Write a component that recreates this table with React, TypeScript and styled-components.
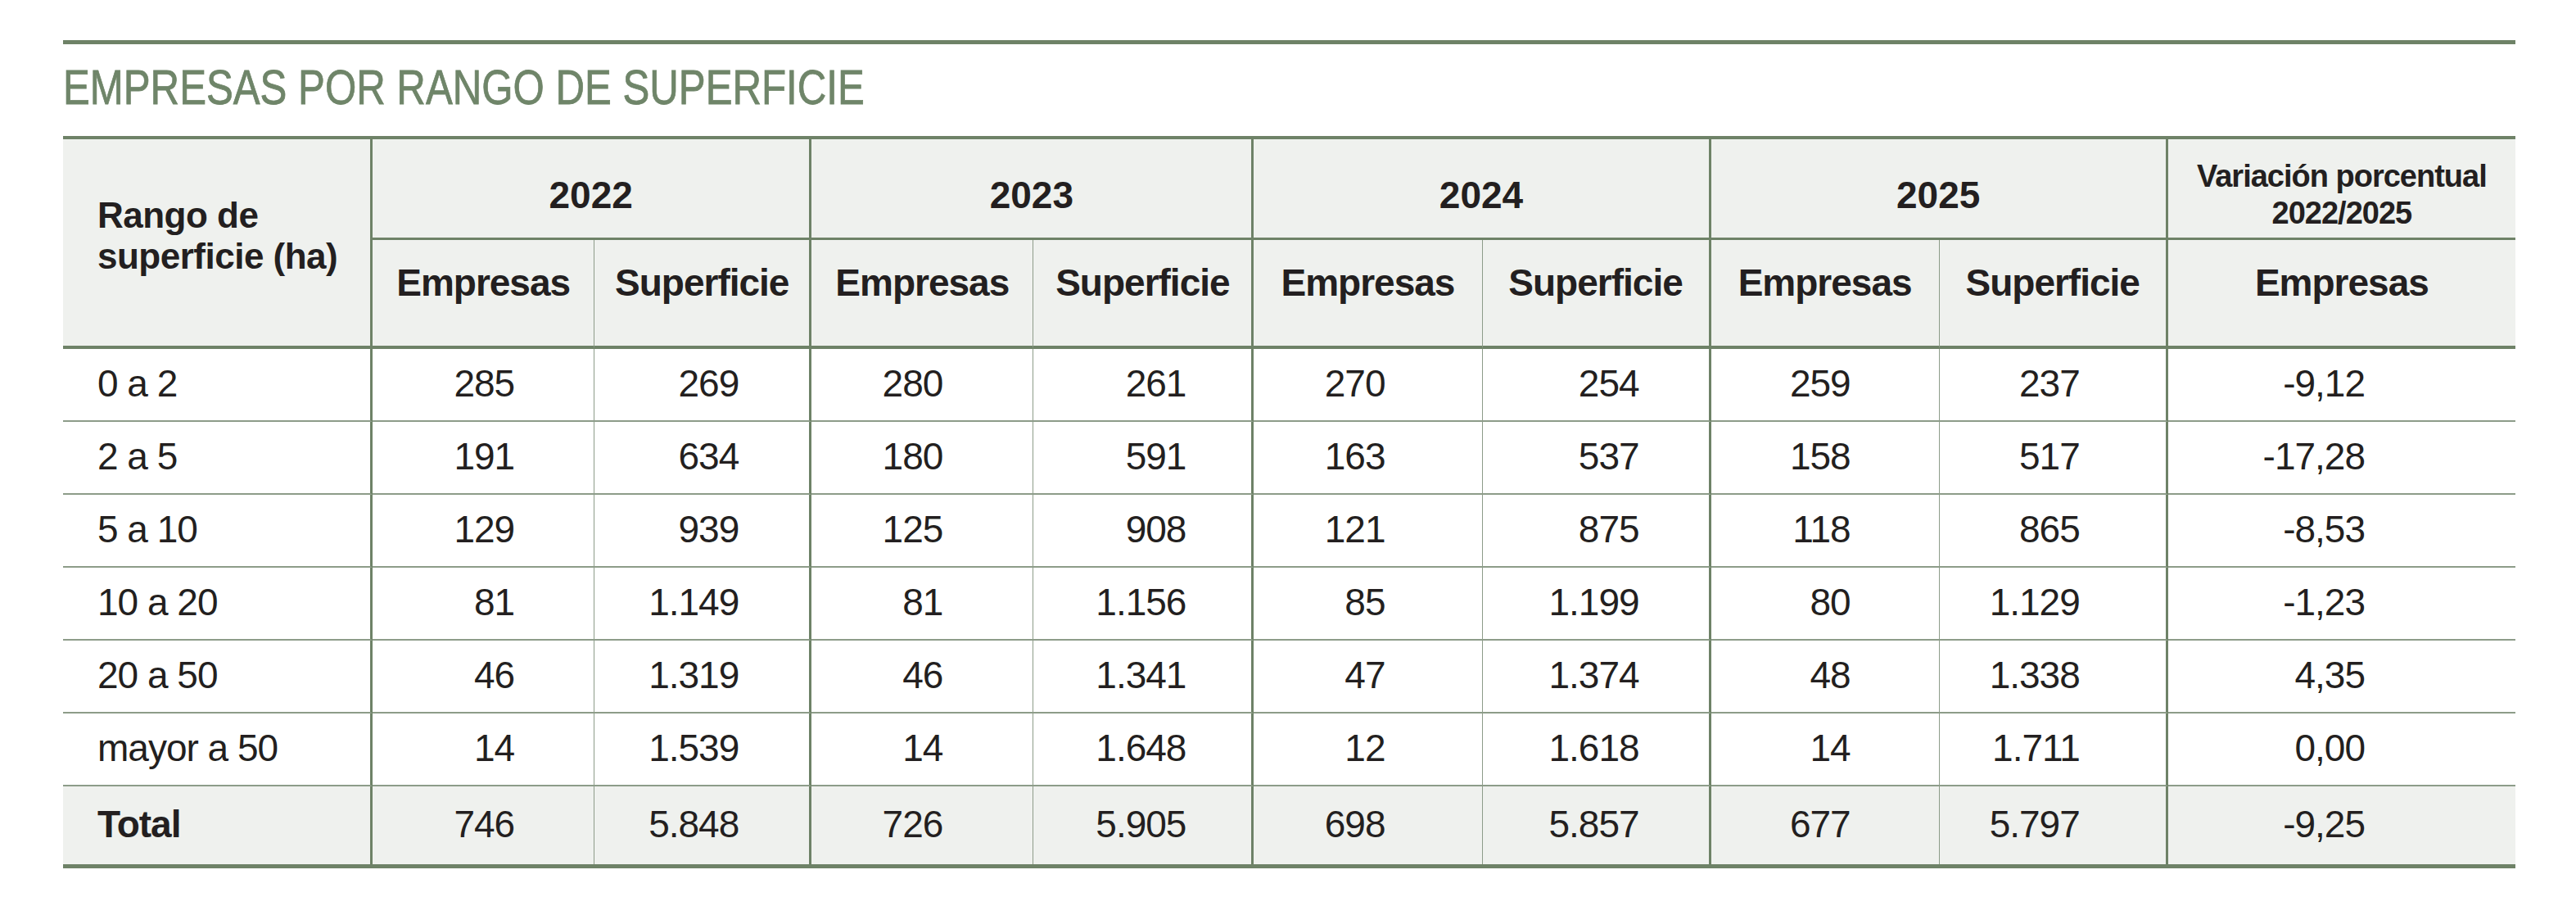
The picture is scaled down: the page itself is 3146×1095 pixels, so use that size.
import * as React from 'react';
import styled, { createGlobalStyle } from 'styled-components';

const LINE = '#6e8267';
const LINE_LIGHT = '#8d9c89';
const HEAD_BG = '#eff1ee';
const INK = '#231f20';

type Edge = 'main' | 'sub' | 'none';

interface Row {
  label: string;
  values: string[];
}

const years = ['2022', '2023', '2024', '2025'];

// ancho de cada columna, en px
const colWidths = [378, 271, 265, 271, 269, 279, 279, 279, 279, 424];

// margen derecho de cada cifra dentro de su columna
const pads = [97, 86, 110, 80, 118, 85, 108, 105, 184];

const edges: Edge[] = ['sub', 'main', 'sub', 'main', 'sub', 'main', 'sub', 'main', 'none'];

const rows: Row[] = [
  { label: '0 a 2', values: ['285', '269', '280', '261', '270', '254', '259', '237', '-9,12'] },
  { label: '2 a 5', values: ['191', '634', '180', '591', '163', '537', '158', '517', '-17,28'] },
  { label: '5 a 10', values: ['129', '939', '125', '908', '121', '875', '118', '865', '-8,53'] },
  { label: '10 a 20', values: ['81', '1.149', '81', '1.156', '85', '1.199', '80', '1.129', '-1,23'] },
  { label: '20 a 50', values: ['46', '1.319', '46', '1.341', '47', '1.374', '48', '1.338', '4,35'] },
  { label: 'mayor a 50', values: ['14', '1.539', '14', '1.648', '12', '1.618', '14', '1.711', '0,00'] },
];

const total: Row = {
  label: 'Total',
  values: ['746', '5.848', '726', '5.905', '698', '5.857', '677', '5.797', '-9,25'],
};

class App extends React.Component {
  render() {
    return (
      <Page>
        <GlobalStyle />
        <Rule />
        <TitleBar>
          <Title>EMPRESAS POR RANGO DE SUPERFICIE</Title>
        </TitleBar>

        <Table>
          <colgroup>
            {colWidths.map((w, i) => (
              <col key={i} style={{ width: w }} />
            ))}
          </colgroup>
          <thead>
            <YearRow>
              <CornerCell rowSpan={2}>
                Rango de
                <br />
                superficie (ha)
              </CornerCell>
              {years.map((y) => (
                <YearCell key={y} colSpan={2}>
                  {y}
                </YearCell>
              ))}
              <VarCell>
                Variación porcentual
                <br />
                2022/2025
              </VarCell>
            </YearRow>
            <SubRow>
              {years.map((y) => (
                <React.Fragment key={y}>
                  <SubCell $edge="sub">Empresas</SubCell>
                  <SubCell $edge="main">Superficie</SubCell>
                </React.Fragment>
              ))}
              <SubCell $edge="none">Empresas</SubCell>
            </SubRow>
          </thead>
          <tbody>
            {rows.map((r) => (
              <BodyRow key={r.label}>
                <LabelCell>{r.label}</LabelCell>
                {r.values.map((v, i) => (
                  <NumCell key={i} $pad={pads[i]} $edge={edges[i]}>
                    {v}
                  </NumCell>
                ))}
              </BodyRow>
            ))}
            <TotalRow>
              <LabelCell $bold>{total.label}</LabelCell>
              {total.values.map((v, i) => (
                <NumCell key={i} $pad={pads[i]} $edge={edges[i]}>
                  {v}
                </NumCell>
              ))}
            </TotalRow>
          </tbody>
        </Table>
      </Page>
    );
  }
}

const GlobalStyle = createGlobalStyle`
  body {
    margin: 0;
    background: #fff;
    color: ${INK};
    font-family: "Liberation Sans", Arial, sans-serif;
  }
`;

const Page = styled.div`
  width: 2995px;
  padding: 49px 0 40px 77px;
`;

const Rule = styled.div`
  height: 5px;
  background: ${LINE};
`;

const TitleBar = styled.div`
  margin: 23px 0 29px;
  height: 60px;
`;

// no hay fuente estrecha instalada: se comprime la normal
const Title = styled.h1`
  display: inline-block;
  margin: 0;
  font-weight: 400;
  font-size: 60px;
  line-height: 60px;
  color: #6f8569;
  -webkit-text-stroke: 0.8px #6f8569;
  white-space: nowrap;
  transform: scaleX(0.82);
  transform-origin: left center;
`;

const Table = styled.table`
  width: 2995px;
  table-layout: fixed;
  border-collapse: separate;
  border-spacing: 0;
  border-top: 4px solid ${LINE};
  border-bottom: 5px solid ${LINE};
`;

const edgeBorder = (edge: Edge) =>
  edge === 'main' ? `3px solid ${LINE}` : edge === 'sub' ? `1px solid ${LINE_LIGHT}` : 'none';

const HeadCell = styled.th`
  box-sizing: border-box;
  padding: 0;
  background: ${HEAD_BG};
  font-weight: 700;
  vertical-align: middle;
  text-align: center;
`;

const YearRow = styled.tr`
  height: 123px;
`;

const SubRow = styled.tr`
  height: 133px;
`;

const CornerCell = styled(HeadCell)`
  text-align: left;
  padding: 0 0 16px 42px;
  font-size: 44px;
  line-height: 50px;
  letter-spacing: -0.5px;
  border-right: 3px solid ${LINE};
  border-bottom: 4px solid ${LINE};
`;

const YearCell = styled(HeadCell)`
  padding-top: 16px;
  font-size: 46px;
  line-height: 50px;
  border-right: 3px solid ${LINE};
  border-bottom: 3px solid ${LINE};
`;

const VarCell = styled(HeadCell)`
  padding-top: 16px;
  font-size: 38px;
  line-height: 45px;
  letter-spacing: -1px;
  white-space: nowrap;
  border-bottom: 3px solid ${LINE};
`;

const SubCell = styled(HeadCell)<{ $edge: Edge }>`
  padding-bottom: 25px;
  font-size: 46px;
  line-height: 50px;
  letter-spacing: -1px;
  white-space: nowrap;
  border-right: ${(p) => edgeBorder(p.$edge)};
  border-bottom: 4px solid ${LINE};
`;

const BodyRow = styled.tr`
  height: 89px;

  td {
    border-bottom: 2px solid ${LINE_LIGHT};
  }
`;

const TotalRow = styled.tr`
  height: 95px;
  background: ${HEAD_BG};
`;

const LabelCell = styled.td<{ $bold?: boolean }>`
  box-sizing: border-box;
  padding: 0 0 4px 42px;
  font-size: 46px;
  line-height: 50px;
  letter-spacing: -1px;
  font-weight: ${(p) => (p.$bold ? 700 : 400)};
  white-space: nowrap;
  border-right: 3px solid ${LINE};
`;

const NumCell = styled.td<{ $pad: number; $edge: Edge }>`
  box-sizing: border-box;
  padding: 0 ${(p) => p.$pad}px 4px 0;
  text-align: right;
  font-size: 46px;
  line-height: 50px;
  letter-spacing: -1px;
  white-space: nowrap;
  border-right: ${(p) => edgeBorder(p.$edge)};
`;

export default App;
